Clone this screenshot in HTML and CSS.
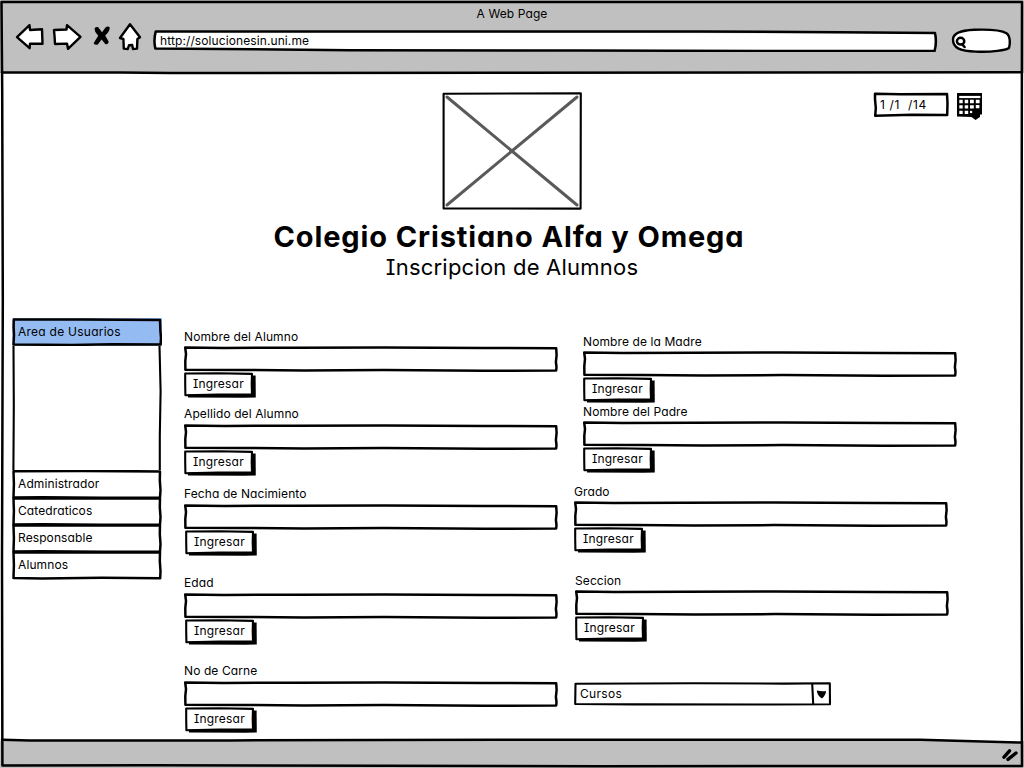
FILE: index.html
```html
<!DOCTYPE html>
<html lang="es">
<head>
<meta charset="utf-8">
<title>A Web Page</title>
<link rel="stylesheet" href="styles.css">
</head>
<body>
<svg class="defs" aria-hidden="true">
  <symbol id="input-box" viewBox="0 0 374 26" preserveAspectRatio="none">
    <path class="fill" d="M1.6 1.6 190 1.3 372 2.4 371.6 24.5 190 24.7 1.8 23.8z"/>
    <path class="ink" d="M1.2 1.5 40 1.9 110 1.7 200 1.4 300 2 372.2 2.3 372.6 9 371.9 16 372.5 21 372.2 24.5 300 24.7 200 24.1 120 24.4 60 24 1.4 23.8 1.3 15 2 8z"/>
  </symbol>
  <symbol id="button-box" viewBox="0 0 72 26" preserveAspectRatio="none">
    <path d="M4 4 71.6 3.6 71.8 25.4 60 25.8 4 25.6z"/>
    <path class="fill" d="M1.4 1.4 68 2 67.5 22.8 2 22.4z"/>
    <path class="ink slim" d="M1.2 1.5 34 1.3 68 1.9 67.7 12 68 22.5 34 22.6 1.4 23.2 1.2 12z"/>
  </symbol>
</svg>
<div class="window">
  <header class="chrome">
    <div class="chrome-title">A Web Page</div>
    <div class="toolbar">
      <svg class="back" viewBox="14 22 32 30"><path class="icon" d="M17 37.2 29.5 25.2 30 30 42 29.2 42.5 43.8 30 43.6 29.6 48.2z"/></svg>
      <svg class="forward" viewBox="51 22 32 30"><path class="icon" d="M54 30 66.5 29.5 67 25.2 80.5 36.8 68 48.8 67 43.6 55 44 54.6 37z"/></svg>
      <svg class="stop" viewBox="92 24 20 24"><path d="M94.5 29Q95 26.3 98 27.1L102 32.2 105.5 27.5Q108 25.8 109.8 27.4 109.6 31.5 105.2 35.4L108.6 41.5Q108.5 44.6 105.5 44.2L101.6 39.6 97.8 44.6Q95 45.5 93.6 43.2L98.2 35.8Q94.6 32.5 94.5 29z"/></svg>
      <svg class="home" viewBox="117 21 26 31"><path class="icon" d="M130 24.2 140 37.2 137.4 39 137 48.6 133 49 132.2 45 129 45.2 127.8 49 123.8 48.6 123.4 39 120 38z"/></svg>
      <div class="sketch url">
        <svg viewBox="153 29 785 23" preserveAspectRatio="none"><path class="fill" d="M156 32 934.5 33.5 934.5 51 155 48.6z"/><path class="ink" d="M155.7 31.6 450 31.5 700 31.5 840 32.2 935 33Q937 42 934.6 51L840 51 580 50.6 350 50.3 220 49 155.3 48.4Q153.4 40 155.7 31.6z"/></svg>
        <span>http://solucionesin.uni.me</span>
      </div>
      <svg class="search" viewBox="949 26 64 29"><path class="icon" d="M953 39.5C953 33.5 959 30.5 974 29.8 991 29.2 1001 30 1006.5 33.2 1010.5 36 1010.3 44 1009 48 1006 50 992 52.4 976 51.6 959 51 953 47.5 953 39.5z"/><ellipse class="ink" cx="960.6" cy="41.2" rx="3.7" ry="3.4"/><path class="ink" d="M962.4 44.6 964.6 47"/></svg>
    </div>
  </header>

  <main class="content">
    <section class="hero">
      <svg class="photo" viewBox="442 92 141 119"><path class="cross" d="M447 97 577 205M577 97 447 205"/><path class="ink slim" d="M443.6 93.8 580.8 93.2 580.6 208.6 443.6 208.4z"/></svg>
      <h1>Colegio Cristiano Alfa y Omega</h1>
      <h2>Inscripcion de Alumnos</h2>
      <div class="date">
        <div class="sketch date-field">
          <svg viewBox="873 91 77 27" preserveAspectRatio="none"><path class="ink" d="M875 93.7 900 94.2 947 93.9 947.5 103 947.2 115 912 114.8 875.2 115.8 875.8 108 875 99z"/></svg>
          <span>1 /1&nbsp; /14</span>
        </div>
        <svg class="calendar" viewBox="956 92 28 29"><path d="M957 93H982V114.5H980V117L975.5 120 971.5 117 957 116.4z"/><path class="calendar-head" d="M959.2 97H980.4"/><path class="calendar-cells" d="M959.3 101.5H962.7M964.7 101.5H968.2M970 101.5H973.8M975.8 101.5H979.6M959.3 106.8H962.7M964.7 106.8H968.2M970 106.8H973.8M975.8 106.6H979.4M959.3 112.3H962.7M964.7 112.3H968.2"/><path class="calendar-head" d="M970 112H972.2"/></svg>
      </div>
    </section>

    <section class="columns">
      <nav class="accordion">
        <div class="sketch accordion-head">
          <svg viewBox="0 0 150 28" preserveAspectRatio="none"><path class="blue" d="M.5 0H150V28H.5z"/><path class="ink" d="M1.8 1.5 70 1.6 148 2 148.4 13 149 20 148.6 26.5 100 26.2 60 27 1.5 26.4 2 17 1.6 9z"/></svg>
          <span>Area de Usuarios</span>
        </div>
        <div class="sketch accordion-body"><svg viewBox="0 0 150 124" preserveAspectRatio="none"><path class="ink slim" d="M1.5 0 1.8 60 1.4 124M147.5 0 148.6 45 147.8 90 147.8 124"/></svg></div>
        <div class="sketch item"><svg viewBox="0 0 150 29" preserveAspectRatio="none"><path class="ink" d="M1.5 1.2 70 .9 148 1.4 147.8 10 148.5 20 148 27.5 90 27.8 30 27.3 1.5 27.5 1.9 14z"/></svg><span>Administrador</span></div>
        <div class="sketch item"><svg viewBox="0 0 150 29" preserveAspectRatio="none"><path class="ink" d="M1.5 1.2 70 1.4 148 1.4 147.8 10 148.5 20 148 27.5 90 27.8 30 27.3 1.5 27.5 1.9 14z"/></svg><span>Catedraticos</span></div>
        <div class="sketch item"><svg viewBox="0 0 150 29" preserveAspectRatio="none"><path class="ink" d="M1.5 1.2 70 1.4 148 1.4 147.8 10 148.5 20 148 27.5 90 27.8 30 27.3 1.5 27.5 1.9 14z"/></svg><span>Responsable</span></div>
        <div class="sketch item"><svg viewBox="0 0 150 29" preserveAspectRatio="none"><path class="ink" d="M1.5 1.2 70 1.4 148 1.4 147.8 10 148.5 20 148.2 27.2 90 26.8 30 27.4 1.5 27 1.9 14z"/></svg><span>Alumnos</span></div>
      </nav>

      <form class="fields fields-left">
        <div class="field low-label"><label>Nombre del Alumno</label><svg class="box"><use href="#input-box"/></svg><div class="sketch button"><svg><use href="#button-box"/></svg><span>Ingresar</span></div></div>
        <div class="field gap-s"><label>Apellido del Alumno</label><svg class="box"><use href="#input-box"/></svg><div class="sketch button"><svg><use href="#button-box"/></svg><span>Ingresar</span></div></div>
        <div class="field gap-m nudge"><label>Fecha de Nacimiento</label><svg class="box"><use href="#input-box"/></svg><div class="sketch button"><svg><use href="#button-box"/></svg><span>Ingresar</span></div></div>
        <div class="field gap-l nudge"><label>Edad</label><svg class="box"><use href="#input-box"/></svg><div class="sketch button"><svg><use href="#button-box"/></svg><span>Ingresar</span></div></div>
        <div class="field gap-ml nudge"><label>No de Carne</label><svg class="box"><use href="#input-box"/></svg><div class="sketch button"><svg><use href="#button-box"/></svg><span>Ingresar</span></div></div>
      </form>

      <form class="fields fields-right">
        <div class="field low-label indent"><label>Nombre de la Madre</label><svg class="box"><use href="#input-box"/></svg><div class="sketch button"><svg><use href="#button-box"/></svg><span>Ingresar</span></div></div>
        <div class="field low-label indent gap-tight"><label>Nombre del Padre</label><svg class="box"><use href="#input-box"/></svg><div class="sketch button"><svg><use href="#button-box"/></svg><span>Ingresar</span></div></div>
        <div class="field low-label gap-m"><label>Grado</label><svg class="box"><use href="#input-box"/></svg><div class="sketch button"><svg><use href="#button-box"/></svg><span>Ingresar</span></div></div>
        <div class="field low-label gap-l indent-s"><label>Seccion</label><svg class="box"><use href="#input-box"/></svg><div class="sketch button"><svg><use href="#button-box"/></svg><span>Ingresar</span></div></div>
        <div class="sketch select">
          <svg viewBox="0 0 258 24" preserveAspectRatio="none"><path class="ink slim" d="M1.5 1.8 120 1.3 210 1.6 255.8 1.2 256 22.3 200 22.5 60 22.4 1.2 22zM238.2 1.5 239.2 22"/><path d="M242.8 8.4Q247.5 9.6 252 9Q252 13 248 16.4Q243.3 14 242.8 8.4z"/></svg>
          <span>Cursos</span>
        </div>
      </form>
    </section>
  </main>

  <footer class="status">
    <svg class="grip" viewBox="1000 746 20 18"><path d="M1004 757.2 1009.5 750.8M1008 759.4 1016 753"/></svg>
  </footer>
  <svg class="frame" viewBox="0 0 1024 768">
    <path class="paper" d="M930 738H1021V742.2L932 739.6z"/>
    <path class="ink" d="M1.5 2 500 2.1 1022 2 1021.6 250 1021.4 500 1022 766 600 766.2 150 765.2 2.4 765.6 2 560 2.8 300 2.2 90z"/>
    <path class="ink" d="M2 72.4 120 72.6 170 73 500 72.7 1021 72.2M2 739.8 30 740.5 230 740.4 500 739.8 920 739.8 1021 742.6"/>
  </svg>
</div>
</body>
</html>
```
FILE: styles.css
```css
* { box-sizing: border-box; }

body {
  margin: 0;
  background: #fff;
  color: #000;
  font: 12px/20px Inter, "Open Sans", sans-serif;
  letter-spacing: 0.1px;
  font-feature-settings: "cv11", "cv08";
  overflow: hidden;
}

svg { display: block; }
.defs { display: none; }

/* hand-drawn line styles */
.ink { fill: none; stroke: #000; stroke-width: 2.5; stroke-linejoin: round; stroke-linecap: round; }
.slim { stroke-width: 2.1; }
.fill, .paper { fill: #fff; }
.icon { fill: #fff; stroke: #000; stroke-width: 2.4; stroke-linejoin: round; }
.blue { fill: #94bbf2; }

/* outline and text share one grid cell */
.sketch { display: grid; align-items: center; }
.sketch > * { grid-area: 1 / 1; }
.sketch > svg { width: 100%; height: 100%; }
.sketch > span { z-index: 1; white-space: pre; }

.window {
  position: relative;
  display: flex;
  flex-direction: column;
  width: 1024px;
  height: 768px;
}
.frame { position: absolute; inset: 0; width: 1024px; height: 768px; pointer-events: none; }

.chrome { height: 73px; padding-top: 4px; background: #c0c0c0; }
.chrome-title { height: 17px; text-align: center; }
.toolbar { display: flex; align-items: flex-start; padding-left: 14px; }
.back { width: 32px; height: 30px; margin: 1px 5px 0 0; }
.forward { width: 32px; height: 30px; margin-top: 1px; }
.stop { width: 20px; height: 24px; margin: 3px 5px 0 9px; }
.home { width: 26px; height: 31px; }
.url { width: 785px; height: 23px; margin: 8px 0 0 10px; }
.url span { padding: 1px 0 0 7px; }
.search { width: 64px; height: 29px; margin: 5px 0 0 11px; }

.content { flex: 1; }
.hero {
  display: grid;
  grid-template-columns: 1fr 470px 1fr;
  justify-items: center;
  height: 245px;
  padding-top: 18px;
  align-content: start;
}
.hero > .photo, .hero > h1, .hero > h2 { grid-column: 2; white-space: nowrap; }
.photo { width: 141px; height: 119px; margin-top: 1px; }
.cross { fill: none; stroke: #5a5a5a; stroke-width: 3; stroke-linecap: round; }
h1 { margin: 8px 0 0 -6px; font-size: 29px; line-height: 36px; font-weight: 700; letter-spacing: 0.87px; }
h2 { margin: -1px 0 0; font-size: 22px; line-height: 26px; font-weight: 400; letter-spacing: 0.22px; }
.date { grid-column: 3; grid-row: 1; display: flex; gap: 6px; justify-self: end; align-items: flex-start; margin-right: 40px; }
.date-field { width: 77px; height: 27px; }
.date-field span { padding: 1px 0 0 7px; letter-spacing: 0.65px; }
.calendar { width: 28px; height: 29px; margin-top: 1px; }
.calendar-cells { fill: none; stroke: #fff; stroke-width: 3.3; }
.calendar-head { fill: none; stroke: #fff; stroke-width: 2.2; }

.columns { display: flex; align-items: flex-start; padding-left: 12px; }
.accordion { width: 150px; }
.accordion span { padding: 0 0 0 6px; letter-spacing: 0.25px; }
.accordion-head { height: 28px; }
.accordion-body { height: 124px; }
.item { height: 29px; margin-bottom: -2px; }
.accordion .item span { padding-bottom: 2px; letter-spacing: 0.1px; }

.fields-left { margin: 8px 0 0 22px; width: 374px; }
.fields-right { margin: 13px 0 0 16px; width: 390px; }
.field label { display: block; height: 20px; white-space: nowrap; }
.low-label label { padding-top: 1px; }
.box { width: 374px; height: 26px; }
.button { width: 72px; height: 26px; }
.button span { padding: 0 0 2px 9px; letter-spacing: 0.2px; }
.indent { margin-left: 9px; }
.indent-s { margin-left: 1px; }
.nudge .button { margin-left: 1px; }
.gap-tight { margin-top: -2px; }
.gap-s { margin-top: 6px; }
.gap-m { margin-top: 8px; }
.gap-ml { margin-top: 16px; }
.gap-l { margin-top: 17px; }
.select { width: 258px; height: 24px; margin-top: 40px; }
.select span { padding: 0 0 0 6px; letter-spacing: 0.3px; }

.status { display: flex; justify-content: flex-end; height: 27px; padding: 5px 4px 0 0; background: #c0c0c0; }
.grip { width: 20px; height: 18px; fill: none; stroke: #000; stroke-width: 3.4; stroke-linecap: round; }
```
